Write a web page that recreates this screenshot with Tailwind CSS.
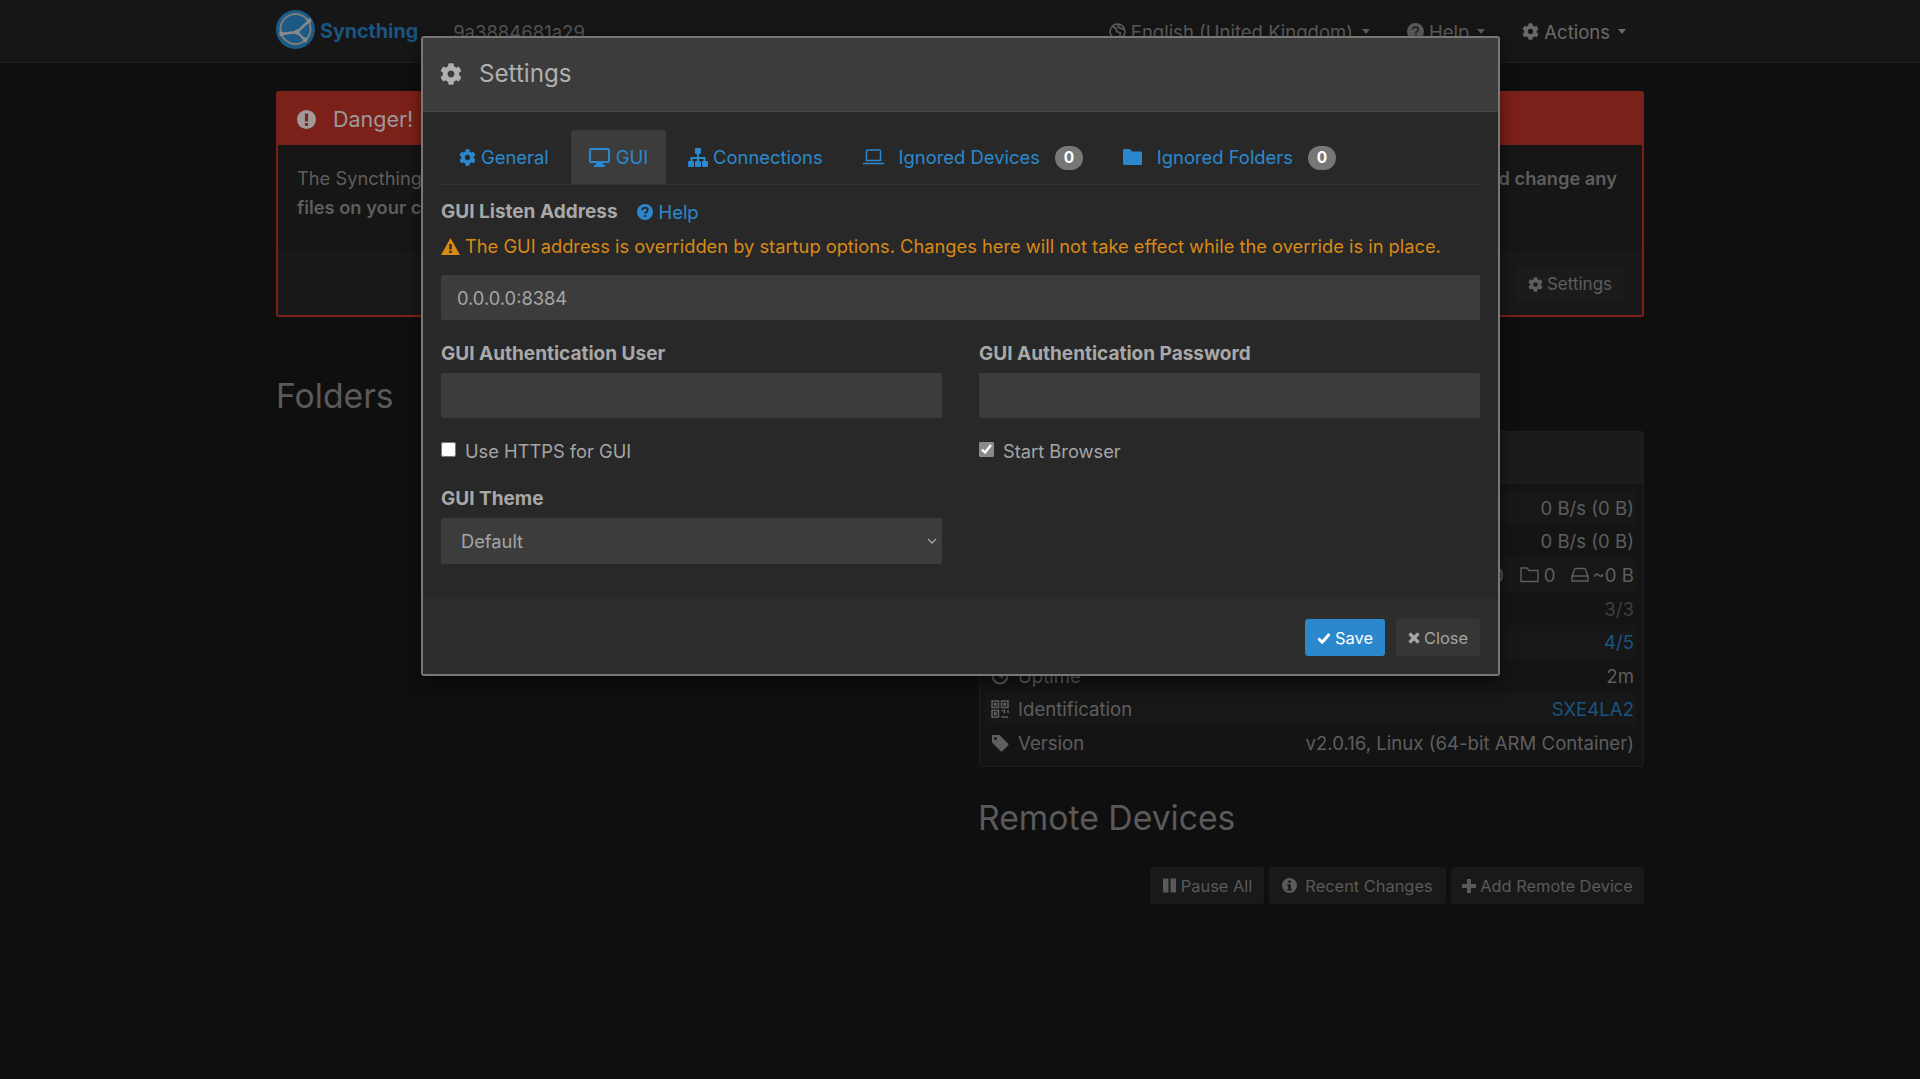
<!DOCTYPE html>
<html lang="en">
<head>
  <meta charset="UTF-8" />
  <title>Syncthing</title>
  <script src="https://cdn.jsdelivr.net/npm/@tailwindcss/browser@4"></script>
</head>
<body class="bg-[#0f0f0f] font-[Inter,sans-serif] text-[18.3px] leading-[26px]">

  <svg class="hidden">
    <symbol id="cog" viewBox="0 0 512 512"><path fill="currentColor" d="M487.4 315.7l-42.6-24.6c4.3-23.2 4.3-47 0-70.2l42.6-24.6c4.9-2.8 7.1-8.6 5.5-14-11.1-35.6-30-67.8-54.7-94.6-3.8-4.1-10-5.1-14.8-2.3L380.8 110c-17.9-15.4-38.5-27.3-60.8-35.1V25.8c0-5.6-3.9-10.5-9.4-11.7-36.7-8.2-74.3-7.8-109.2 0-5.5 1.2-9.4 6.1-9.4 11.7V75c-22.2 7.9-42.8 19.8-60.8 35.1L88.7 85.5c-4.9-2.8-11-1.9-14.8 2.3-24.7 26.7-43.6 58.9-54.7 94.6-1.7 5.4.6 11.2 5.5 14L67.3 221c-4.3 23.2-4.3 47 0 70.2l-42.6 24.6c-4.9 2.8-7.1 8.6-5.5 14 11.1 35.6 30 67.8 54.7 94.6 3.8 4.1 10 5.1 14.8 2.3l42.6-24.6c17.9 15.4 38.5 27.3 60.8 35.1v49.2c0 5.6 3.9 10.5 9.4 11.7 36.7 8.2 74.3 7.8 109.2 0 5.5-1.2 9.4-6.1 9.4-11.7v-49.2c22.2-7.9 42.8-19.8 60.8-35.1l42.6 24.6c4.9 2.8 11 1.9 14.8-2.3 24.7-26.7 43.6-58.9 54.7-94.6 1.5-5.5-.7-11.3-5.6-14.1zM256 336c-44.1 0-80-35.9-80-80s35.9-80 80-80 80 35.9 80 80-35.9 80-80 80z"/></symbol>
    <symbol id="question" viewBox="0 0 24 24"><circle cx="12" cy="12" r="12" fill="currentColor"/><path d="M8 9.2c0-2.3 1.8-3.7 4-3.7s4 1.4 4 3.4c0 3-3.6 3-3.6 5.6" fill="none" stroke="#282828" stroke-width="2.8"/><rect x="10.8" y="16.4" width="3" height="3" fill="#282828"/></symbol>
    <symbol id="info" viewBox="0 0 24 24"><circle cx="12" cy="12" r="12" fill="currentColor"/><rect x="10" y="4" width="4" height="3.6" fill="#151515"/><path d="M8.5 10h5.5v7.4h1.6V20H8.5v-2.6H10v-4.8H8.5z" fill="#151515"/></symbol>
  </svg>

  <div class="relative h-[1079px] overflow-hidden">

    <!-- Navbar -->
    <nav class="h-[63px] bg-[#161616] border-b border-[#202020]">
      <div class="w-[1368px] mx-auto flex items-center h-[62px] text-[#5c5c5c] text-[18.5px]">
        <svg class="w-[39px] h-[39px] -mt-[3px]" viewBox="0 0 39 39">
          <circle cx="19.5" cy="19.5" r="19.5" fill="#1c5a85"/>
          <circle cx="19.5" cy="19" r="15" fill="none" stroke="#7d7d7d" stroke-width="2"/>
          <path d="M21 22L5.5 24M21 22L33 11M21 22L29 30" stroke="#8a8a8a" stroke-width="2.4" fill="none"/>
          <circle cx="21" cy="22" r="2.6" fill="#8a8a8a"/>
          <circle cx="5.5" cy="24" r="2.4" fill="#8a8a8a"/>
          <circle cx="33" cy="11" r="2.4" fill="#8a8a8a"/>
          <circle cx="29" cy="30" r="2.4" fill="#8a8a8a"/>
        </svg>
        <span class="ml-[5px] text-[#1a5580] font-bold text-[19.7px] -mt-[1px]">Syncthing</span>
        <span class="ml-[35px] text-[#555555] mt-[1px]">9a3884681a29</span>
        <div class="ml-auto flex items-center pr-[18px] mt-[1px]">
          <svg class="w-[17px] h-[17px]" viewBox="0 0 24 24" fill="none" stroke="currentColor" stroke-width="2.4"><circle cx="12" cy="12" r="10.5"/><path d="M5 5l5 3 1 4 5 2-1 7M14 2l-1 4 5 2 4 1"/></svg>
          <span class="ml-[5px]">English (United Kingdom)</span>
          <span class="ml-[9px] w-0 h-0 border-x-[4px] border-x-transparent border-t-[5px] border-t-[#5c5c5c]"></span>
          <svg class="ml-[37px] w-[17px] h-[17px] text-[#5c5c5c]"><use href="#question"/></svg>
          <span class="ml-[5px]">Help</span>
          <span class="ml-[8px] w-0 h-0 border-x-[4px] border-x-transparent border-t-[5px] border-t-[#5c5c5c]"></span>
          <svg class="ml-[37px] w-[17px] h-[17px] text-[#6a6a6a]"><use href="#cog"/></svg>
          <span class="ml-[5px] text-[#6a6a6a]">Actions</span>
          <span class="ml-[8px] w-0 h-0 border-x-[4px] border-x-transparent border-t-[5px] border-t-[#6a6a6a]"></span>
        </div>
      </div>
    </nav>

    <main class="w-[1368px] mx-auto">
      <!-- Danger panel -->
      <section class="mt-[28px] h-[226px] border-2 border-[#7c2119] rounded-[3px] bg-[#161616] flex flex-col">
        <div class="h-[52px] bg-[#7c2119] flex items-center pl-[19px] text-[#9a9a9a] text-[21.5px]">
          <svg class="w-[19px] h-[19px] text-[#a09a9a]" viewBox="0 0 24 24"><circle cx="12" cy="12" r="12" fill="currentColor"/><rect x="10" y="4.5" width="4" height="10" fill="#7c2119"/><rect x="10" y="16.5" width="4" height="3.5" fill="#7c2119"/></svg>
          <span class="ml-[17px] -mt-[1px]">Danger!</span>
        </div>
        <div class="px-[19px] pt-[19px] flex-1 text-[#5e5e5e] leading-[29px]">
          <div class="flex justify-between pr-[6px]">
            <span>The Syncthing admin interface is configured to allow remote access without a password.</span>
            <span class="font-semibold">and change any</span>
          </div>
          <div class="font-semibold">files on your computer.</div>
        </div>
        <div class="h-[63px] bg-[#181818] flex justify-end items-start pt-[16px] pr-[17px]">
          <button class="h-[32px] w-[110px] rounded-[3px] bg-[#1b1b1b] text-[#5e5e5e] text-[17px] flex items-center justify-center gap-[4px]">
            <svg class="w-[15px] h-[15px]"><use href="#cog"/></svg>Settings
          </button>
        </div>
      </section>

      <div class="grid grid-cols-2 gap-x-[38px] mt-[61px]">
        <div>
          <h1 class="text-[#5a5a5a] text-[33.7px] leading-[36px]">Folders</h1>
        </div>
        <div>
          <h1 class="text-[#5a5a5a] text-[33.7px] leading-[36px] -ml-[1px]">This Device</h1>
          <!-- This device panel -->
          <div class="mt-[17px] h-[336px] bg-[#141414] border border-[#1e1e1e] rounded-[3px] text-[#5e5e5e] text-[18.6px]">
            <div class="h-[52px] bg-[#1a1c1a]"></div>
            <div class="px-[6px] pt-[7px]">
              <div class="h-[33.6px] bg-[#171717] flex items-center justify-between pl-[5px] pr-[3px]"><span>Download Rate</span><span>0 B/s (0 B)</span></div>
              <div class="h-[33.6px] flex items-center justify-between pl-[5px] pr-[3px]"><span>Upload Rate</span><span>0 B/s (0 B)</span></div>
              <div class="h-[33.6px] bg-[#171717] flex items-center justify-between pl-[5px] pr-[3px]">
                <span>Local State (Total)</span>
                <span class="flex items-center">0
                  <svg class="ml-[16px] w-[19px] h-[17px]" viewBox="0 0 19 17" fill="none" stroke="currentColor" stroke-width="1.4"><path d="M1 15.5V2h6l2 2.5h9v11z"/></svg>
                  <span class="ml-[5px]">0</span>
                  <svg class="ml-[15px] w-[18px] h-[15px]" viewBox="0 0 18 15" fill="none" stroke="currentColor" stroke-width="1.4"><path d="M1 9l3-7.5h10L17 9v5H1zM1 9h16"/></svg>
                  <span class="ml-[4px]">~0 B</span>
                </span>
              </div>
              <div class="h-[33.6px] flex items-center justify-between pl-[5px] pr-[3px]"><span>Listeners</span><span class="text-[#3f3f3f]">3/3</span></div>
              <div class="h-[33.6px] bg-[#171717] flex items-center justify-between pl-[5px] pr-[3px]"><span>Discovery</span><span class="text-[#1a5580]">4/5</span></div>
              <div class="h-[33.6px] flex items-center justify-between pl-[5px] pr-[3px]">
                <span class="flex items-center gap-[9px]"><svg class="w-[18px] h-[18px]" viewBox="0 0 18 18" fill="none" stroke="currentColor" stroke-width="2"><circle cx="9" cy="9" r="7.5"/><path d="M9 4v5l3 2"/></svg>Uptime</span><span>2m</span>
              </div>
              <div class="h-[33.6px] bg-[#171717] flex items-center justify-between pl-[5px] pr-[3px]">
                <span class="flex items-center gap-[9px]">
                  <svg class="w-[18px] h-[18px]" viewBox="0 0 18 18" fill="none" stroke="currentColor" stroke-width="1.5"><rect x="1" y="1" width="6.5" height="6.5"/><rect x="10.5" y="1" width="6.5" height="6.5"/><rect x="1" y="10.5" width="6.5" height="6.5"/><path d="M3.500 3.500h1.500v1.500h-1.500zM13 3.500h1.500v1.500H13zM3.500 13h1.500v1.500h-1.500zM10.500 10.500h3v3M17 10v3M10.500 17h6.500"/></svg>
                  Identification
                </span>
                <span class="text-[#1a5580]">SXE4LA2</span>
              </div>
              <div class="h-[33.6px] flex items-center justify-between pl-[5px] pr-[3px]">
                <span class="flex items-center gap-[9px]">
                  <svg class="w-[18px] h-[18px]" viewBox="0 0 18 18"><path fill="currentColor" d="M1 1h7.500l8.500 8.500a1.500 1.500 0 0 1 0 2.100L11.600 17a1.500 1.500 0 0 1-2.100 0L1 8.500zM4.500 3a1.500 1.500 0 1 0 0 3 1.500 1.500 0 0 0 0-3z" fill-rule="evenodd"/></svg>
                  Version
                </span>
                <span>v2.0.16, Linux (64-bit ARM Container)</span>
              </div>
            </div>
          </div>

          <h1 class="mt-[33px] text-[#5a5a5a] text-[33.7px] leading-[36px] -ml-[1px]">Remote Devices</h1>
          <div class="mt-[31px] flex justify-end gap-[5px] text-[#5a5a5a] text-[16.4px]">
            <button class="h-[37px] w-[114px] rounded-[3px] bg-[#191919] flex items-center justify-center gap-[4px]">
              <svg class="w-[15px] h-[15px]" viewBox="0 0 15 15" fill="currentColor"><rect x="1" y="0.5" width="5.5" height="14"/><rect x="8.5" y="0.5" width="5.5" height="14"/></svg>Pause All
            </button>
            <button class="h-[37px] w-[177px] rounded-[3px] bg-[#191919] flex items-center justify-center gap-[8px]">
              <svg class="w-[15px] h-[15px]"><use href="#info"/></svg>Recent Changes
            </button>
            <button class="h-[37px] w-[193px] rounded-[3px] bg-[#191919] flex items-center justify-center gap-[4px]">
              <svg class="w-[14px] h-[14px]" viewBox="0 0 14 14" fill="currentColor"><path d="M5 0h4v5h5v4H9v5H5V9H0V5h5z"/></svg>Add Remote Device
            </button>
          </div>
        </div>
      </div>
    </main>

    <!-- Settings modal -->
    <div class="absolute left-[421px] top-[36px] w-[1079px] h-[640px] border-2 border-[#777777] rounded-[3px] bg-[#282828] flex flex-col shadow-[0_5px_15px_rgba(0,0,0,0.5)]">
      <div class="h-[74px] shrink-0 bg-[#3c3c3c] border-b border-[#4a4a4a] flex items-center pl-[17px] text-[#b0b0b0]">
        <svg class="w-[22px] h-[22px] -mt-[1px]"><use href="#cog"/></svg>
        <span class="ml-[17px] text-[24.2px] -mt-[1px]">Settings</span>
      </div>

      <div class="flex-1 px-[18px] pt-[18px]">
        <!-- Tabs -->
        <div class="h-[55px] flex gap-[4px] border-b border-[#333333] text-[#2b88cc] text-[18.4px]">
          <a class="h-[54px] px-[18px] flex items-center gap-[5px]"><svg class="w-[17px] h-[17px]"><use href="#cog"/></svg>General</a>
          <a class="h-[54px] px-[18px] flex items-center gap-[6px] bg-[#3c3c3c] rounded-t-[3px]">
            <svg class="w-[21px] h-[19px]" viewBox="0 0 21 19"><path fill="currentColor" fill-rule="evenodd" d="M2 0h17a2 2 0 0 1 2 2v11a2 2 0 0 1-2 2h-5v2h2v2H5v-2h2v-2H2a2 2 0 0 1-2-2V2a2 2 0 0 1 2-2zM2 2v11h17V2z"/></svg>GUI
          </a>
          <a class="h-[54px] px-[18px] flex items-center gap-[5px]">
            <svg class="w-[20px] h-[19px]" viewBox="0 0 20 19" fill="currentColor"><rect x="7" y="0" width="6" height="6" rx="1"/><path d="M9 6h2v3h6.500v4h-2V11H11v2H9v-2H4.500v2h-2V9H9z"/><rect x="0" y="13" width="6" height="6" rx="1"/><rect x="7" y="13" width="6" height="6" rx="1"/><rect x="14" y="13" width="6" height="6" rx="1"/></svg>
            Connections
          </a>
          <a class="h-[54px] px-[18px] flex items-center">
            <svg class="w-[21px] h-[16px]" viewBox="0 0 21 16" fill="none" stroke="currentColor" stroke-width="1.500"><path d="M3.500 12V2a1 1 0 0 1 1-1h12a1 1 0 0 1 1 1v10M0 14.500h21"/><path d="M3.500 11.500h14"/></svg>
            <span class="ml-[15px]">Ignored Devices</span>
            <span class="ml-[15px] w-[28px] h-[24px] rounded-full bg-[#777777] text-white text-[15.500px] font-bold flex items-center justify-center mt-[2px]">0</span>
          </a>
          <a class="h-[54px] px-[18px] flex items-center">
            <svg class="w-[19px] h-[16px]" viewBox="0 0 19 16" fill="currentColor"><path d="M1.500 0h5.500l2 2.500h8.500a1.500 1.500 0 0 1 1.500 1.500v10.500a1.500 1.500 0 0 1-1.500 1.500h-16A1.500 1.500 0 0 1 0 14.500v-13A1.500 1.500 0 0 1 1.500 0z"/></svg>
            <span class="ml-[15px]">Ignored Folders</span>
            <span class="ml-[15px] w-[28px] h-[24px] rounded-full bg-[#777777] text-white text-[15.500px] font-bold flex items-center justify-center mt-[2px]">0</span>
          </a>
        </div>

        <!-- Listen address -->
        <div class="mt-[14px] flex items-center">
          <label class="font-bold text-[#a8a8a8] text-[19px]">GUI Listen Address</label>
          <svg class="ml-[19px] w-[16px] h-[16px] text-[#2b88cc]"><use href="#question"/></svg>
          <a class="ml-[6px] text-[#2b88cc] text-[18.4px]">Help</a>
        </div>
        <div class="mt-[8px] flex items-center text-[#d88a17]">
          <svg class="w-[19px] h-[17px]" viewBox="0 0 19 17"><path fill="currentColor" fill-rule="evenodd" d="M9.500 0l9.500 17H0zM8.300 6v5.500h2.400V6zM8.300 12.800v2.200h2.400v-2.200z"/></svg>
          <span class="ml-[5px]">The GUI address is overridden by startup options. Changes here will not take effect while the override is in place.</span>
        </div>
        <input class="mt-[16px] block w-full h-[45px] px-[16px] bg-[#3c3c3c] rounded-[2px] text-[#a5a5a5] outline-none" value="0.0.0.0:8384">

        <!-- Auth -->
        <div class="mt-[21px] grid grid-cols-2 gap-x-[37px]">
          <div>
            <label class="block font-bold text-[#a8a8a8] text-[19px]">GUI Authentication User</label>
            <input class="mt-[6px] block w-full h-[45px] px-[16px] bg-[#3c3c3c] rounded-[2px] outline-none">
            <label class="mt-[20px] flex items-center text-[#a5a5a5]">
              <input type="checkbox" class="w-[15px] h-[15px] -mt-[3px] accent-[#8a8a8a]">
              <span class="ml-[9px]">Use HTTPS for GUI</span>
            </label>
            <label class="mt-[22px] block font-bold text-[#a8a8a8] text-[19px]">GUI Theme</label>
            <div class="mt-[6px] relative">
              <select class="block w-full h-[46px] pl-[20px] bg-[#3c3c3c] rounded-[2px] text-[#a5a5a5] appearance-none outline-none">
                <option>Default</option>
              </select>
              <svg class="absolute right-[4px] top-[19px] w-[12px] h-[8px] text-[#a5a5a5]" viewBox="0 0 12 8" fill="none" stroke="currentColor" stroke-width="1.300"><path d="M2 2l4 4 4-4"/></svg>
            </div>
          </div>
          <div>
            <label class="block font-bold text-[#a8a8a8] text-[19px]">GUI Authentication Password</label>
            <input type="password" class="mt-[6px] block w-full h-[45px] px-[16px] bg-[#3c3c3c] rounded-[2px] outline-none">
            <label class="mt-[20px] flex items-center text-[#a5a5a5]">
              <input type="checkbox" checked class="w-[15px] h-[15px] -mt-[3px] accent-[#8a8a8a]">
              <span class="ml-[9px]">Start Browser</span>
            </label>
          </div>
        </div>
      </div>

      <!-- Footer -->
      <div class="h-[75px] shrink-0 bg-[#2d2d2d] flex justify-end items-start pt-[20px] pr-[18px] gap-[11px] text-[16.4px]">
        <button class="h-[37px] w-[80px] rounded-[3px] bg-[#2b88cc] text-white flex items-center justify-center gap-[4px]">
          <svg class="w-[14px] h-[12px]" viewBox="0 0 14 12"><path d="M1.500 6.500l3.700 3.700L12.500 2" fill="none" stroke="currentColor" stroke-width="3"/></svg>Save
        </button>
        <button class="h-[37px] w-[84px] rounded-[3px] bg-[#363636] text-[#a5a5a5] flex items-center justify-center gap-[4px]">
          <svg class="w-[12px] h-[12px]" viewBox="0 0 12 12"><path d="M1.500 1.500l9 9M10.500 1.500l-9 9" fill="none" stroke="currentColor" stroke-width="3.200"/></svg>Close
        </button>
      </div>
    </div>

  </div>
</body>
</html>
